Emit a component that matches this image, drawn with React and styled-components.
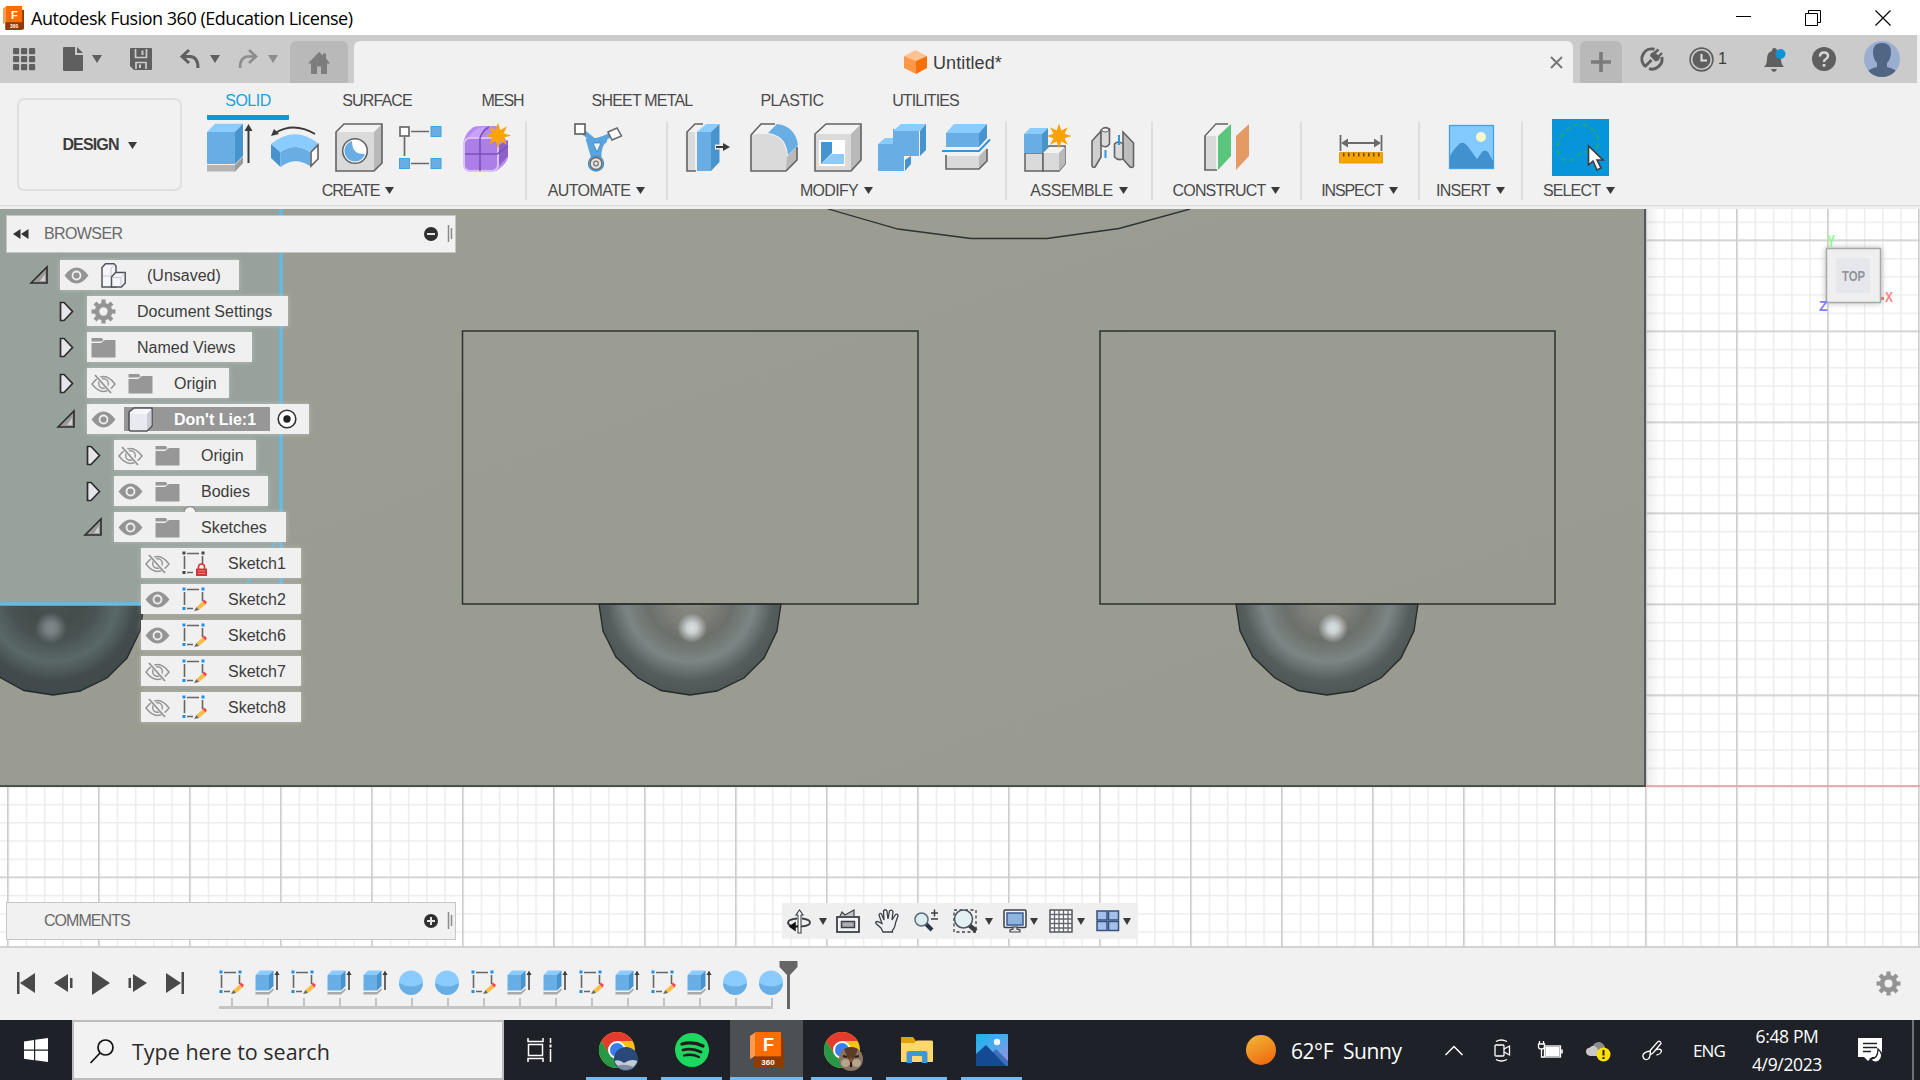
import React from "react";
import styled, { createGlobalStyle } from "styled-components";

const GlobalStyle = createGlobalStyle`
  * {
    box-sizing: border-box;
  }
  body {
    margin: 0;
    overflow: hidden;
    font-family: "Liberation Sans", Arial, sans-serif;
    font-size: 16px;
    color: #3c3c3c;
  }
  svg {
    display: block;
    flex-shrink: 0;
    overflow: visible;
  }
`;

/* ---------- helpers ---------- */

function starPoints(cx, cy, outer, inner, n = 8) {
  const pts = [];
  for (let i = 0; i < n * 2; i++) {
    const r = i % 2 ? inner : outer;
    const a = (Math.PI * i) / n - Math.PI / 2;
    pts.push(`${(cx + r * Math.cos(a)).toFixed(2)},${(cy + r * Math.sin(a)).toFixed(2)}`);
  }
  return pts.join(" ");
}

const Caret = ({ color = "#3a3a3a", w = 9, h = 7 }) => (
  <svg width={w} height={h} viewBox="0 0 10 8" preserveAspectRatio="none">
    <path d="M0 0H10L5 8Z" fill={color} />
  </svg>
);

const Icon48 = ({ children }) => (
  <svg width="48" height="49" viewBox="0 0 48 49" fill="none">
    {children}
  </svg>
);

/* ---------- ribbon icons ---------- */

const Extrude = () => (
  <Icon48>
    <path d="M0 42H28L36 34V40L28 48.500H0Z" fill="#b4b4b4" />
    <path d="M28 42L36 34V40L28 48.500Z" fill="#9b9b9b" />
    <path d="M0 9H28V41H0Z" fill="#68aee4" />
    <path d="M0 9L8 .7H36L28 9Z" fill="#8accff" />
    <path d="M28 9L36 .7V33L28 41Z" fill="#4693cd" />
    <path d="M41.500 40V5" stroke="#3a3a3a" strokeWidth="2" />
    <path d="M37.500 8L41.500 1L45.500 8Z" fill="#3a3a3a" />
  </Icon48>
);

const Revolve = () => (
  <Icon48>
    <path d="M0 21L9.500 29V44L0 35Z" fill="#4693cd" />
    <path d="M9.500 29Q24 19 39 29V43Q24 33 9.500 44Z" fill="#68aee4" />
    <path d="M0 21Q24 1.500 48 21L39 29Q24 19 9.500 29Z" fill="#8accff" />
    <path d="M40 29L47 22V36L40 43Z" fill="#fff" stroke="#606060" strokeWidth="1.600" />
    <path d="M4 10Q23 -1.500 44 11" stroke="#3a3a3a" strokeWidth="2" />
    <path d="M0 13L3 6L8 11Z" fill="#3a3a3a" />
  </Icon48>
);

const Hole = () => (
  <Icon48>
    <path d="M1 9H39V48H1Z" fill="#dadada" />
    <path d="M1 9L9 1H47L39 9Z" fill="#f3f3f3" />
    <path d="M39 9L47 1V40L39 48Z" fill="#b9b9b9" />
    <path d="M1 9L9 1H47V40L39 48H1Z" stroke="#636363" strokeWidth="1.600" />
    <circle cx="20" cy="28" r="12.300" fill="#fff" stroke="#636363" strokeWidth="1.600" />
    <path d="M17 18A10.500 10.500 0 1 0 30 31Q17 32 17 18Z" fill="#68aee4" />
  </Icon48>
);

const CreateSketch = () => (
  <Icon48>
    <path d="M12 8.500H30M5.500 14V33M12 40.500H30" stroke="#6a6a6a" strokeWidth="1.700" />
    <rect x="1" y="4" width="9" height="9" fill="#fff" stroke="#6a6a6a" strokeWidth="1.700" />
    <g fill="#68aee4" stroke="#4b9fdd">
      <rect x="32" y="3.500" width="10" height="10" />
      <rect x="0.500" y="35.500" width="10" height="10" />
      <rect x="32" y="35.500" width="10" height="10" />
    </g>
  </Icon48>
);

const Form = () => (
  <Icon48>
    <path d="M0.500 20Q1 12 9 5Q11 3 18 3H34L45 20V34Q44 40 36 46Q34 48.500 28 48.500H9Q0.500 48.500 0.500 40Z" fill="#b78af0" />
    <path d="M36 22L45 17V33L36 43Z" fill="#8c5fc9" />
    <path d="M3 17Q12 3 22 4L16 15H3Z" fill="#c9a3fb" />
    <rect x="1" y="15" width="34" height="33" rx="6" fill="#aa7fe8" stroke="#dabffb" strokeWidth="2" />
    <path d="M17 15V48M2 31H34L45 23M17 15Q19 8 26 4" stroke="#7b4fb5" strokeWidth="1.500" />
    <polygon points={starPoints(35, 12.5, 13, 6)} fill="#f9a402" />
  </Icon48>
);

const Automate = () => (
  <Icon48>
    <path d="M9 9Q17 15 20 18Q30 16 36 12" stroke="#5aa5de" strokeWidth="5" />
    <path d="M14 15L20 36M32 15Q24 22 25 36" stroke="#5aa5de" strokeWidth="5" />
    <path d="M14 11Q17 17 30 15L33 19L27 24L24 33H20L18 22Z" fill="#5aa5de" />
    <path d="M19 20H27L23 29Z" fill="#f1f1f1" stroke="#3f83b8" strokeWidth=".8" />
    <rect x="1" y="1" width="10" height="10" fill="#fff" stroke="#666" strokeWidth="1.700" />
    <path d="M34 9L43 5L47.500 13L38 17Z" fill="#fff" stroke="#666" strokeWidth="1.500" />
    <circle cx="22" cy="40.500" r="7.500" fill="#e4e4e4" stroke="#4693cd" strokeWidth="1.500" />
    <circle cx="22" cy="40.500" r="6" stroke="#666" strokeWidth="1.500" />
    <circle cx="22" cy="40.500" r="2.300" stroke="#777" strokeWidth="1.200" />
  </Icon48>
);

const PressPull = () => (
  <Icon48>
    <path d="M1 9H9V48H1Z" fill="#dadada" />
    <path d="M10 48H1V9L9 1H17" stroke="#636363" strokeWidth="1.600" />
    <path d="M11 9H25V48H11Z" fill="#68aee4" />
    <path d="M11 9L20 1H33.500L25 9Z" fill="#8accff" />
    <path d="M25 9L33.500 1V39L25 48Z" fill="#4693cd" />
    <path d="M29 24H40" stroke="#f1f1f1" strokeWidth="5" />
    <path d="M30 24H39" stroke="#3a3a3a" strokeWidth="2" />
    <path d="M37 20L44 24L37 28Z" fill="#3a3a3a" />
  </Icon48>
);

const Fillet = () => (
  <Icon48>
    <path d="M1 48V12L11 1H27L18 11Q36 14 37 33L48 23V36L36 48Z" fill="#dadada" />
    <path d="M2 12L11 1H27L18 11Q8 10 2 12Z" fill="#f3f3f3" />
    <path d="M37 34L47 23V37L36 48Z" fill="#b9b9b9" />
    <path d="M25 1H11L1 12V48H36L47 37V24" stroke="#636363" strokeWidth="1.600" />
    <path d="M18 10L27 1Q45 3 48 22L38 32Q36 12 18 10Z" fill="#68aee4" />
  </Icon48>
);

const Shell = () => (
  <Icon48>
    <path d="M1 11H37V48H1Z" fill="#dadada" />
    <path d="M1 11L12 1H47L37 11Z" fill="#f3f3f3" />
    <path d="M37 11L47 1V37L37 48Z" fill="#b9b9b9" />
    <path d="M1 11L12 1H47V37L37 48H1Z" stroke="#636363" strokeWidth="1.600" />
    <rect x="5" y="17" width="26" height="26" fill="#fff" />
    <path d="M7 19H18V30L7 41Z" fill="#4693cd" />
    <path d="M7 41L18 31H30V41Z" fill="#8accff" />
  </Icon48>
);

const Combine = () => (
  <Icon48>
    <path d="M0 21H15V6H41V33H26V48H0Z" fill="#68aee4" />
    <path d="M0 21L7 15H15V21Z" fill="#8accff" />
    <path d="M15 8L23 1H48L42 8Z" fill="#8accff" />
    <path d="M42 8L48 1V27L42 33Z" fill="#4693cd" />
    <path d="M27 37L33 33V41L27 48Z" fill="#4693cd" />
  </Icon48>
);

const Split = () => (
  <Icon48>
    <path d="M4 10H37V24H4Z" fill="#68aee4" />
    <path d="M4 10L12 1H45L37 10Z" fill="#8accff" />
    <path d="M37 10L45 1V15L37 24Z" fill="#4693cd" />
    <path d="M4 33H37V46H4Z" fill="#dadada" />
    <path d="M37 33L45 25V38L37 46Z" fill="#b9b9b9" />
    <path d="M4 32V46H37L45 38V26" stroke="#636363" strokeWidth="1.600" />
    <path d="M0 28H37L48 16.500" stroke="#2e97e0" strokeWidth="2" />
  </Icon48>
);

const NewComponent = () => (
  <Icon48>
    <path d="M1 30H19V48H1Z" fill="#dadada" stroke="#636363" strokeWidth="1.500" />
    <path d="M19 30L25 23H41V41L35 48H19Z" fill="#dadada" stroke="#636363" strokeWidth="1.500" />
    <path d="M19 30L25 24H40L35 30Z" fill="#f3f3f3" />
    <path d="M35 30L41 24V41L35 48Z" fill="#b9b9b9" />
    <path d="M0 11H18V30H0Z" fill="#68aee4" />
    <path d="M0 11L6 5H24L18 11Z" fill="#8accff" />
    <path d="M18 11L24 5V24L18 30Z" fill="#4693cd" />
    <polygon points={starPoints(35, 13, 12.5, 6)} fill="#f9a402" />
  </Icon48>
);

const Joint = () => (
  <Icon48>
    <path d="M4 18L13 8V34L7 44Q4 45 4 42Z" fill="#cfcfcf" stroke="#636363" strokeWidth="1.600" />
    <path d="M13 7Q17 2.500 21.500 6V21Q18 26 13 22Z" fill="#dadada" stroke="#636363" strokeWidth="1.600" />
    <ellipse cx="17.300" cy="7" rx="3.600" ry="2" fill="#eee" stroke="#636363" />
    <path d="M35 9L45.500 20V43Q45 45 42 44L35 36Z" fill="#bdbdbd" stroke="#636363" strokeWidth="1.600" />
    <path d="M26.500 21Q30 17 35 21V36Q30 38 26.500 34Z" fill="#dadada" stroke="#636363" strokeWidth="1.600" />
    <path d="M31 12V22M17.500 27V35" stroke="#2e97e0" strokeWidth="2" />
  </Icon48>
);

const Construct = () => (
  <Icon48>
    <path d="M1 13H12V47H1Z" fill="#dadada" />
    <path d="M13 47H1V13L12 1H24" stroke="#636363" strokeWidth="1.700" />
    <path d="M2 13L12 2H24L14 13Z" fill="#f3f3f3" />
    <path d="M14 13L27 1V33L14 47Z" fill="#5ac57d" />
    <path d="M32 13L45 1V33L32 47Z" fill="#e59a65" />
  </Icon48>
);

const Inspect = () => (
  <Icon48>
    <path d="M3.500 12V28M44.500 12V28M6 20H42" stroke="#6a6a6a" strokeWidth="1.800" />
    <path d="M4 20L11 15.500V24.500ZM44 20L37 15.500V24.500Z" fill="#6a6a6a" />
    <rect x="2.500" y="29.500" width="43" height="10.500" fill="#f9a402" />
    <path d="M6 31.500H43" stroke="#5d4b1e" strokeDasharray="1.500 3.500" strokeWidth="4" />
    <path d="M2.500 29.500H45.500V40H2.500Z" stroke="#dd8f00" strokeWidth=".8" />
  </Icon48>
);

const Insert = () => (
  <Icon48>
    <rect x="1.500" y="2.500" width="44" height="43" fill="#82caff" stroke="#4b9fdd" strokeWidth="1.300" />
    <path d="M2 33Q7 24 12.500 20Q17 19 21 25L29 36L34 29Q37 26 40 29L45 38V45H2Z" fill="#4091cd" />
    <circle cx="33" cy="14" r="5" fill="#f9f8c9" />
  </Icon48>
);

const Select = () => (
  <svg width="57" height="57" viewBox="0 0 57 57" fill="none">
    <rect width="57" height="57" fill="#0795da" />
    <path
      d="M38 33Q27 32 24 39Q15 45 8 38Q2 28 11 15Q20 3 33 6Q48 12 46 26Q43 32 38 33Z"
      stroke="#23a878"
      strokeWidth="1.800"
      strokeDasharray="5 4"
    />
    <path d="M36.500 27V46L41 42L45 51L49 49L45 41H51Z" fill="#fff" stroke="#3d3d3d" strokeWidth="1.600" />
  </svg>
);

/* ---------- small icons shared by tree and timeline ---------- */

const SketchIcon = ({ locked }) => (
  <svg width="25" height="25" viewBox="0 0 25 25" fill="none">
    <path d="M5 2.500H17M2.500 5V18M20.500 5V14M5 21.500H11" stroke="#666" strokeWidth="1.600" />
    <g fill={locked ? "#444" : "#1d8fe6"}>
      <rect x="0.500" y="0.500" width="3" height="3" />
      <rect x="19.500" y="0.500" width="3" height="3" />
      <rect x="0.500" y="20" width="3" height="3" />
    </g>
    {locked ? (
      <g>
        <path d="M16.500 18V16A3 3 0 0 1 22.500 16V18" stroke="#d33" strokeWidth="1.600" />
        <rect x="14" y="17.500" width="11" height="7.500" fill="#d33638" />
        <path d="M16 20H23M16 22.500H23" stroke="#f08080" />
      </g>
    ) : (
      <g>
        <path d="M14.500 20L20.500 14.500L23.500 17.500L17 23Z" fill="#fbbd45" />
        <path d="M20.500 14.500L22 12.500L25 15L23.500 17.500Z" fill="#f2474c" />
        <path d="M14.500 20L17 23L12 24Z" fill="#666" />
      </g>
    )}
  </svg>
);

const ExtrudeSmall = () => (
  <svg width="25" height="25" viewBox="0 0 25 25" fill="none">
    <path d="M0.500 22H14L18.500 18V20.500L14 24.500H0.500Z" fill="#a9a9a9" />
    <path d="M0.500 5H14V20.500H0.500Z" fill="#68aee4" />
    <path d="M0.500 5L5 .5H18.500L14 5Z" fill="#8accff" />
    <path d="M14 5L18.500 .5V16L14 20.500Z" fill="#4693cd" />
    <path d="M22 20V3" stroke="#3a3a3a" strokeWidth="1.500" />
    <path d="M19.500 5L22 .5L24.500 5Z" fill="#3a3a3a" />
  </svg>
);

const SphereSmall = () => (
  <svg width="25" height="25" viewBox="0 0 25 25">
    <circle cx="12" cy="12.500" r="12" fill="#8accff" />
    <path d="M0 13Q12 20 24 13A12 12 0 0 1 0 13Z" fill="#68aee4" />
  </svg>
);

const Eye = ({ off }) => (
  <svg width="25" height="25" viewBox="0 0 25 25" fill="none">
    {off ? (
      <g stroke="#949494" strokeWidth="1.400">
        <path d="M1 13Q12.500 -2 24 13Q12.500 28 1 13Z" />
        <circle cx="12.500" cy="12.500" r="4.800" />
        <path d="M4 3L21 22" stroke="#f0f0f0" strokeWidth="4" />
        <path d="M4 4L20 22" strokeWidth="1.800" />
      </g>
    ) : (
      <g>
        <path d="M.5 12.500Q12.500 -3.500 24.500 12.500Q12.500 28.500 .5 12.500Z" fill="#949494" />
        <circle cx="12.500" cy="12.500" r="4" stroke="#efefef" strokeWidth="1.800" />
      </g>
    )}
  </svg>
);

const Folder = () => (
  <svg width="25" height="25" viewBox="0 0 25 25" fill="#979797">
    <path d="M.5 3.500Q.5 3 1 3H11L12.500 5.500L10 6.500H.5Z" />
    <path d="M.5 8H10L14 5H24.500V22.500H.5Z" />
  </svg>
);

const Gear = ({ size = 25, color = "#949494", hole = 4.2 }) => (
  <svg width={size} height={size} viewBox="0 0 25 25" fill="none">
    <g stroke={color} strokeWidth="4.200">
      {[0, 45, 90, 135].map((a) => (
        <path key={a} d="M12.500 .5V24.500" transform={`rotate(${a} 12.500 12.500)`} />
      ))}
    </g>
    <circle cx="12.500" cy="12.500" r="8.800" fill={color} />
    <circle cx="12.500" cy="12.500" r={hole} fill="#f0f0f0" />
  </svg>
);

const Assembly = () => (
  <svg width="25" height="25" viewBox="0 0 25 25" fill="#f6f6fa" stroke="#50545a" strokeWidth="1.500">
    <path d="M1 4.500L4.500 .8H13L15 3V24H1Z" />
    <path d="M2 13H10V5M10 5L14 2" fill="none" stroke="#c5c8d0" strokeWidth="1" />
    <path d="M10.500 24V14L14.500 9.500H24.200V20L20.500 24Z" />
    <path d="M11.500 14.500H20V23M20 14.500L23.500 10.500" fill="none" stroke="#c5c8d0" strokeWidth="1" />
  </svg>
);

const Component = () => (
  <svg width="25" height="25" viewBox="0 0 25 25">
    <path d="M1 5L6 1H24V19L19 24H3Q1 24 1 22Z" fill="#f7f7fb" stroke="#50545a" strokeWidth="1.600" />
    <path d="M19 7L23.500 2V18L19 23Z" fill="#c9ccd4" />
    <path d="M2 7H19V23H2Z" fill="#e9eaf1" />
  </svg>
);

const Disclosure = ({ open }) =>
  open ? (
    <svg width="18" height="18" viewBox="0 0 18 18">
      <path d="M1 17L17 1V17Z" fill="#9a9a9a" stroke="#2c2c2c" strokeWidth="1.600" />
      <path d="M10 15L15 8V15Z" fill="#cfcfcf" />
    </svg>
  ) : (
    <svg width="15" height="21" viewBox="0 0 15 21">
      <path d="M1.500 1.500H5L13.500 10.500L5 19.500H1.500Z" fill="#e6e6ea" stroke="#2c2c2c" strokeWidth="1.700" />
    </svg>
  );

/* ---------- title bar ---------- */

const TitleBar = styled.header`
  display: flex;
  align-items: center;
  height: 35px;
  padding: 0 29px 0 3px;
  background: #fff;
`;

const TitleText = styled.h1`
  flex: 1;
  margin: 1px 0 0 7px;
  font: 400 18px "Open Sans", "Noto Sans", sans-serif;
  letter-spacing: -0.48px;
  color: #000;
  white-space: nowrap;
`;

const WindowButtons = styled.div`
  display: flex;
  align-items: center;
  gap: 54px;
`;

const FusionIcon = ({ w, h }) => (
  <svg width={w} height={h} viewBox="0 0 34 37" preserveAspectRatio="none">
    <path d="M4 6L34 6V36H4Z" fill="#8f3a00" />
    <path d="M0 4L6 0V24L0 28Z" fill="#ff9a52" />
    <path d="M4 25H31V37H4Z" fill="#8f3a00" />
    <path d="M5 0H31V25H5Z" fill="#ff6d00" />
    <text x="18.500" y="19.500" fontSize="18" fontWeight="700" textAnchor="middle" fill="#fff" fontFamily="Liberation Sans">
      F
    </text>
    <text x="18" y="34" fontSize="8" fontWeight="700" textAnchor="middle" fill="#fff" fontFamily="Liberation Sans">
      360
    </text>
  </svg>
);

const AppTitle = () => (
  <TitleBar>
    <FusionIcon w={21} h={24} />
    <TitleText>Autodesk Fusion 360 (Education License)</TitleText>
    <WindowButtons>
      <svg width="15" height="16" viewBox="0 0 15 16">
        <path d="M0 6.500H15" stroke="#000" />
      </svg>
      <svg width="16" height="16" viewBox="0 0 16 16" fill="none" stroke="#000">
        <path d="M.5 3.500H12.500V15.500H.5ZM3.500 3V.5H15.500V12.500H13" />
      </svg>
      <svg width="16" height="16" viewBox="0 0 16 16" stroke="#000" strokeWidth="1.200">
        <path d="M.5 .5L15.500 15.500M15.500 .5L.5 15.500" />
      </svg>
    </WindowButtons>
  </TitleBar>
);

/* ---------- document tab bar ---------- */

const TabBar = styled.nav`
  display: flex;
  align-items: center;
  height: 48px;
  margin-right: 3px;
  background: #cbcbcb;
`;

const QuickAccess = styled.div`
  display: flex;
  align-items: center;
  width: 290px;
  padding-left: 13px;
`;

const Slot = styled.div`
  display: flex;
  align-items: center;
  gap: ${(p) => p.$gap || 0}px;
  width: ${(p) => p.$w}px;
`;

const SmallTab = styled.div`
  display: flex;
  align-items: center;
  justify-content: center;
  align-self: flex-end;
  width: ${(p) => p.$w}px;
  height: 42px;
  padding-top: ${(p) => p.$pt || 0}px;
  border-radius: 6px 6px 0 0;
  background: #b9b9b9;
`;

const DocumentTab = styled.div`
  display: flex;
  align-items: center;
  align-self: flex-end;
  width: 1219px;
  height: 42px;
  margin: 0 7px 0 6px;
  padding: 0 10px 0 550px;
  border-radius: 6px 6px 0 0;
  background: #f1f1f1;
`;

const DocumentName = styled.span`
  flex: 1;
  margin: 2px 0 0 6px;
  font-size: 18px;
  letter-spacing: 0.1px;
`;

const Account = styled.div`
  display: flex;
  align-items: center;
  padding-left: 18px;
`;

const DocumentTabs = () => (
  <TabBar>
    <QuickAccess>
      <Slot $w={50}>
        <svg width="22" height="22" viewBox="0 0 22 22" fill="#5f5f5f">
          {[0, 8, 16].map((y) => [0, 8, 16].map((x) => <rect key={x + "-" + y} x={x} y={y} width="6.200" height="6.200" rx="1" />))}
        </svg>
      </Slot>
      <Slot $w={67} $gap={9}>
        <svg width="20" height="24" viewBox="0 0 20 24" fill="#5f5f5f">
          <path d="M0 1Q0 0 1 0H12V8H20V23Q20 24 19 24H1Q0 24 0 23Z" />
          <path d="M14 0L20 6H14Z" />
        </svg>
        <Caret color="#5f5f5f" w={10} h={8} />
      </Slot>
      <Slot $w={50}>
        <svg width="22" height="22" viewBox="0 0 22 22">
          <path d="M1 0H21Q22 0 22 1V21Q22 22 21 22H4L0 18V1Q0 0 1 0Z" fill="#5f5f5f" />
          <path d="M5.500 1V9.500H16.500V1M6 21V14.500H16V21" fill="none" stroke="#cbcbcb" strokeWidth="1.700" />
          <path d="M12.500 2.500V7M10 16.500V20" stroke="#cbcbcb" strokeWidth="2" />
        </svg>
      </Slot>
      <Slot $w={58} $gap={10}>
        <svg width="20" height="20" viewBox="0 0 20 20" fill="none" stroke="#5f5f5f" strokeWidth="3">
          <path d="M9 1L2 7.500L9 14M3 7.500H10Q18 8 18 19" />
        </svg>
        <Caret color="#5f5f5f" w={10} h={8} />
      </Slot>
      <Slot $w={52} $gap={10}>
        <svg width="20" height="20" viewBox="0 0 20 20" fill="none" stroke="#8d8d8d" strokeWidth="2.600">
          <path d="M11 1L18 7.500L11 14M17 7.500H10Q2 8 2 19" />
        </svg>
        <Caret color="#8d8d8d" w={10} h={8} />
      </Slot>
    </QuickAccess>
    <SmallTab $w={58} $pt={2}>
      <svg width="22" height="22" viewBox="0 0 22 22" fill="#7d7d7d">
        <path d="M11 0L15 3.500V1.500H18V6.500L22 11.500H19V22H13V14.500H9V22H3V11.500H0Z" />
      </svg>
    </SmallTab>
    <DocumentTab>
      <svg width="23" height="24" viewBox="0 0 23 24">
        <path d="M0 6L11.500 0L23 6L12 11Z" fill="#ffc393" />
        <path d="M0 6L12 11V24L0 18Z" fill="#ff9747" />
        <path d="M12 11L23 6V18L12 24Z" fill="#fa6f05" />
      </svg>
      <DocumentName>Untitled*</DocumentName>
      <svg width="13" height="13" viewBox="0 0 13 13" stroke="#777" strokeWidth="2">
        <path d="M1 1L12 12M12 1L1 12" />
      </svg>
    </DocumentTab>
    <SmallTab $w={42}>
      <svg width="20" height="20" viewBox="0 0 20 20" stroke="#7b7b7b" strokeWidth="3.600">
        <path d="M10 0V20M0 10H20" />
      </svg>
    </SmallTab>
    <Account>
      <Slot $w={49}>
        <svg width="24" height="24" viewBox="0 0 24 24" fill="none">
          <path d="M14.500 2.300A10 10 0 0 0 5 19.200M21.800 10A10 10 0 0 1 9 21.600" stroke="#5f5f5f" strokeWidth="3" />
          <path d="M4.500 20L11.500 13" stroke="#5f5f5f" strokeWidth="3" />
          <path d="M10 9L15.500 14.500Q19.500 14 20 10L14.500 5Q10.500 5 10 9Z" fill="#5f5f5f" />
          <path d="M14.500 6L18.500 2.500M18 10L22 6" stroke="#5f5f5f" strokeWidth="2.400" />
        </svg>
      </Slot>
      <Slot $w={75} $gap={4}>
        <svg width="25" height="25" viewBox="0 0 25 25" fill="none">
          <circle cx="12.500" cy="12.500" r="11.400" stroke="#5f5f5f" strokeWidth="1.600" />
          <circle cx="12.500" cy="12.500" r="9" fill="#5f5f5f" />
          <path d="M12.500 7V13.500H18" stroke="#e0e0e0" strokeWidth="2" />
        </svg>
        <span>1</span>
      </Slot>
      <Slot $w={48}>
        <svg width="23" height="25" viewBox="0 0 23 25">
          <path d="M10 1Q13 1 13 4Q17 6 17 12Q17 17 20 20H0Q3 17 3 12Q3 5 8 4Q8 1 10 1Z" fill="#5f5f5f" />
          <path d="M7 22H13Q12 25 10 25Q8 25 7 22Z" fill="#5f5f5f" />
          <circle cx="16.500" cy="7" r="5" fill="#0795da" />
        </svg>
      </Slot>
      <Slot $w={52}>
        <svg width="24" height="24" viewBox="0 0 24 24" fill="none">
          <circle cx="12" cy="12" r="12" fill="#5f5f5f" />
          <path d="M8 9.500Q8 5.500 12 5.500Q16 5.500 16 9Q16 11 13.500 12.300Q12 13 12 15" stroke="#d6d6d6" strokeWidth="2.500" />
          <rect x="10.700" y="17" width="2.700" height="2.700" fill="#d6d6d6" />
        </svg>
      </Slot>
      <svg width="36" height="36" viewBox="0 0 36 36">
        <circle cx="18" cy="18" r="18" fill="#99aed0" />
        <path d="M18 2Q27 2 27 11Q27 18 23 22V26Q31 28 31.500 30A18 18 0 0 1 4.500 30Q5 28 13 26V22Q9 18 9 11Q9 2 18 2Z" fill="#516685" />
      </svg>
    </Account>
  </TabBar>
);

/* ---------- ribbon ---------- */

const Ribbon = styled.section`
  display: flex;
  height: 126px;
  background: #f1f1f1;
  box-shadow: inset 0 -3px #eeeeee, inset 0 -4px #d9d9d9;
`;

const WorkspaceButton = styled.div`
  display: flex;
  align-items: center;
  justify-content: center;
  gap: 9px;
  width: 165px;
  height: 93px;
  margin: 15px 17px 0 17px;
  padding-top: 1px;
  border: 2px solid #dfdfdf;
  border-radius: 7px;
  font-weight: 700;
  letter-spacing: -0.85px;
`;

const RibbonMain = styled.div`
  display: flex;
  flex-direction: column;
`;

const RibbonTabs = styled.div`
  display: flex;
  gap: 31px;
  height: 37px;
  padding-left: 8px;
`;

const RibbonTab = styled.div`
  display: flex;
  align-items: center;
  justify-content: center;
  width: ${(p) => p.$w}px;
  padding-top: 3px;
  border-bottom: 5px solid ${(p) => (p.$active ? "#0f97d9" : "transparent")};
  border-radius: 1px;
  letter-spacing: ${(p) => p.$ls}px;
  color: ${(p) => (p.$active ? "#1a9fdf" : "#4a4a4a")};
  white-space: nowrap;
`;

const Groups = styled.div`
  display: flex;
`;

const Group = styled.div`
  display: flex;
  flex-direction: column;
  align-items: center;
  width: ${(p) => p.$w}px;
  height: 78px;
  margin-top: 2px;
  padding: 1px ${(p) => p.$pr || 0}px 0 0;
  border-right: ${(p) => (p.$last ? "none" : "2px solid #dddddd")};
`;

const GroupIcons = styled.div`
  display: flex;
  justify-content: center;
  align-items: center;
  gap: 16px;
  height: 49px;
  padding-left: 2px;
`;

const GroupLabel = styled.div`
  display: flex;
  align-items: center;
  gap: 6px;
  height: 20px;
  margin-top: 10px;
  letter-spacing: ${(p) => p.$ls}px;
  color: #4a4a4a;

  svg {
    margin-bottom: 2px;
  }
`;

const ribbonTabs = [
  ["SOLID", 82, -0.5],
  ["SURFACE", 114, -0.85],
  ["MESH", 75, -1],
  ["SHEET METAL", 142, -0.8],
  ["PLASTIC", 96, -0.5],
  ["UTILITIES", 109, -0.9],
];

const ribbonGroups = [
  { label: "CREATE", w: 328, ls: -1, pr: 8, icons: [Extrude, Revolve, Hole, CreateSketch, Form] },
  { label: "AUTOMATE", w: 141, ls: -0.6, icons: [Automate] },
  { label: "MODIFY", w: 339, ls: -0.7, icons: [PressPull, Fillet, Shell, Combine, Split] },
  { label: "ASSEMBLE", w: 146, ls: -0.5, icons: [NewComponent, Joint] },
  { label: "CONSTRUCT", w: 149, ls: -0.85, icons: [Construct] },
  { label: "INSPECT", w: 118, ls: -1.1, pr: 1, icons: [Inspect] },
  { label: "INSERT", w: 103, ls: -0.7, icons: [Insert] },
  { label: "SELECT", w: 114, ls: -0.85, pr: 2, icons: [Select] },
];

const Toolbar = () => (
  <Ribbon>
    <WorkspaceButton>
      DESIGN
      <Caret />
    </WorkspaceButton>
    <RibbonMain>
      <RibbonTabs>
        {ribbonTabs.map(([name, w, ls], i) => (
          <RibbonTab key={name} $w={w} $ls={ls} $active={i === 0}>
            {name}
          </RibbonTab>
        ))}
      </RibbonTabs>
      <Groups>
        {ribbonGroups.map((g, i) => (
          <Group key={g.label} $w={g.w} $pr={g.pr} $last={i === ribbonGroups.length - 1}>
            <GroupIcons>
              {g.icons.map((Icon, k) => (
                <Icon key={k} />
              ))}
            </GroupIcons>
            <GroupLabel $ls={g.ls}>
              {g.label}
              <Caret />
            </GroupLabel>
          </Group>
        ))}
      </Groups>
    </RibbonMain>
  </Ribbon>
);

/* ---------- model viewport ---------- */

const Viewport = styled.main`
  position: relative;
  height: 737px;
  overflow: hidden;
  background: #fff;
`;

const Pocket = ({ cx, glow, dim }) => {
  const id = "pocket" + cx;
  const pts = [
    [-91, 0], [-87, 27], [-74, 53], [-52, 74], [-29, 86.5], [0, 91],
    [27, 87], [54, 74], [74, 54], [87, 27], [91, 0],
  ];
  return (
    <g>
      <defs>
        <radialGradient id={id} gradientUnits="userSpaceOnUse" cx={cx} cy="388" r="98">
          <stop offset="0" stopColor={dim ? "#4c5353" : "#8e9087"} />
          <stop offset=".28" stopColor={dim ? "#454c4c" : "#7b7d76"} />
          <stop offset=".44" stopColor={dim ? "#495252" : "#6c706b"} />
          <stop offset=".66" stopColor={dim ? "#5b6868" : "#7b8684"} />
          <stop offset=".85" stopColor={dim ? "#434c4d" : "#555e5c"} />
          <stop offset="1" stopColor={dim ? "#3f494b" : "#4d5655"} />
        </radialGradient>
        <radialGradient id={id + "g"}>
          <stop offset="0" stopColor={glow} />
          <stop offset=".35" stopColor={glow} stopOpacity=".85" />
          <stop offset="1" stopColor={glow} stopOpacity="0" />
        </radialGradient>
      </defs>
      <polygon
        points={pts.map(([x, y]) => `${cx + x},${395 + y}`).join(" ")}
        fill={`url(#${id})`}
        stroke="#232a2a"
        strokeWidth="1.300"
      />
      <circle cx={cx + (dim ? -2 : cx > 1000 ? 6 : 2)} cy="419" r={dim ? 16 : 15} fill={`url(#${id}g)`} />
    </g>
  );
};

const Model = () => (
  <svg width="1920" height="737" viewBox="0 0 1920 737" fill="none">
    <defs>
      <pattern id="minor" x="7.500" y="30.700" width="18.200" height="18.200" patternUnits="userSpaceOnUse">
        <path d="M0 0H18.200M0 0V18.200" stroke="#ececec" strokeWidth="3" />
      </pattern>
      <pattern id="major" x="7" y="30.500" width="91" height="91" patternUnits="userSpaceOnUse">
        <path d="M0 0H91M0 0V91" stroke="#cdcdcd" strokeWidth="3" />
      </pattern>
      <linearGradient id="face" x1="0" y1="0" x2="1" y2="1">
        <stop offset="0" stopColor="#9d9e93" />
        <stop offset=".5" stopColor="#9b9c91" />
        <stop offset="1" stopColor="#999a90" />
      </linearGradient>
      <linearGradient id="shade">
        <stop offset="0" stopColor="#000" stopOpacity=".08" />
        <stop offset="1" stopColor="#000" stopOpacity="0" />
      </linearGradient>
    </defs>
    <rect width="1920" height="737" fill="url(#minor)" />
    <rect width="1920" height="737" fill="url(#major)" />
    <rect x="1645" width="16" height="577" fill="url(#shade)" />
    <path d="M1645 577H1920" stroke="#f49a9a" strokeWidth="1.500" />
    <rect width="1645" height="577" fill="url(#face)" />
    <path d="M0 577H1645V0" stroke="#47524f" strokeWidth="1.800" />
    <path d="M828 0L898 20L971 29.500H1047L1119 19.500L1190 0" stroke="#2b3231" strokeWidth="1.300" />
    <Pocket cx={53} glow="#7f898d" dim />
    <Pocket cx={690} glow="#d9e0e2" />
    <Pocket cx={1327} glow="#d9e0e2" />
    <g stroke="#2b3231" strokeWidth="1.500">
      <rect x="462.500" y="122" width="455.500" height="273" />
      <rect x="1100" y="122" width="455" height="273" />
    </g>
    <rect width="281" height="395" fill="#97a29c" />
    <path d="M281 0V395H0" stroke="#63bce3" strokeWidth="3.500" />
    <path d="M281 325L233 395" stroke="#63bce3" strokeWidth="1.800" />
    <circle cx="190" cy="303.500" r="6" fill="#f5f5f5" stroke="#8a8a8a" strokeWidth="1.500" />
  </svg>
);

const Panel = styled.div`
  position: absolute;
  top: ${(p) => p.$top}px;
  left: 6px;
  display: flex;
  align-items: center;
  width: 450px;
  height: 38px;
  padding: 0 0 0 6px;
  border: 1.500px solid #c6c6c6;
  background: #f1f1f1;
`;

const PanelTitle = styled.span`
  flex: 1;
  padding-left: ${(p) => p.$pad}px;
  letter-spacing: ${(p) => p.$ls}px;
  color: #6a6a6a;
`;

const PanelEnd = ({ plus }) => (
  <svg width="31" height="18" viewBox="0 0 31 18" fill="none">
    <circle cx="7" cy="9" r="7" fill="#2f2f2f" />
    <path d={plus ? "M3 9H11M7 5V13" : "M3 9H11"} stroke="#e6e6e6" strokeWidth="2" />
    <path d="M24.500 0V17M27.500 3V14" stroke="#8b8b8b" strokeWidth="1.500" />
  </svg>
);

const Tree = styled.div`
  position: absolute;
  top: 51px;
  left: 30px;
  display: flex;
  flex-direction: column;
  gap: 6px;
`;

const TreeRow = styled.div`
  display: flex;
  align-items: center;
  height: 30px;
  padding-left: ${(p) => p.$level * 27}px;
`;

const Toggle = styled.div`
  display: flex;
  justify-content: center;
  width: 18px;
  margin-right: 12px;
`;

const Node = styled.div`
  display: flex;
  align-items: center;
  gap: 12px;
  width: ${(p) => p.$w}px;
  height: 30px;
  padding-left: 4px;
  background: #f0f0f0;
  box-shadow: 0 0 5px rgba(240, 240, 240, 0.35);
`;

const NodeBody = styled.div`
  display: flex;
  align-items: center;
  gap: 21px;
  height: 24px;
  padding-right: 14px;
  margin-right: ${(p) => (p.$selected ? -5 : 0)}px;
  color: ${(p) => (p.$selected ? "#fff" : "#3c3c3c")};
  font-weight: ${(p) => (p.$selected ? 700 : 400)};
  background: ${(p) => (p.$selected ? "#979797" : "transparent")};
  box-shadow: ${(p) => (p.$selected ? "-4px 0 #979797" : "none")};
  white-space: nowrap;
`;

const NodeText = styled.span`
  padding-top: 1px;
`;

const treeRows = [
  { text: "(Unsaved)", level: 0, w: 179, open: true, eye: "on", icon: <Assembly /> },
  { text: "Document Settings", level: 1, w: 201, open: false, icon: <Gear /> },
  { text: "Named Views", level: 1, w: 165, open: false, icon: <Folder /> },
  { text: "Origin", level: 1, w: 142, open: false, eye: "off", icon: <Folder /> },
  { text: "Don't Lie:1", level: 1, w: 222, open: true, eye: "on", icon: <Component />, selected: true },
  { text: "Origin", level: 2, w: 142, open: false, eye: "off", icon: <Folder /> },
  { text: "Bodies", level: 2, w: 154, open: false, eye: "on", icon: <Folder /> },
  { text: "Sketches", level: 2, w: 172, open: true, eye: "on", icon: <Folder /> },
  { text: "Sketch1", level: 3, w: 160, eye: "off", icon: <SketchIcon locked /> },
  { text: "Sketch2", level: 3, w: 160, eye: "on", icon: <SketchIcon /> },
  { text: "Sketch6", level: 3, w: 160, eye: "on", icon: <SketchIcon /> },
  { text: "Sketch7", level: 3, w: 160, eye: "off", icon: <SketchIcon /> },
  { text: "Sketch8", level: 3, w: 160, eye: "off", icon: <SketchIcon /> },
];

const BrowserTree = () => (
  <Tree>
    {treeRows.map((row, i) => (
      <TreeRow key={i} $level={row.level}>
        <Toggle>{row.open !== undefined && <Disclosure open={row.open} />}</Toggle>
        <Node $w={row.w}>
          {row.eye && <Eye off={row.eye === "off"} />}
          <NodeBody $selected={row.selected}>
            {row.icon}
            <NodeText>{row.text}</NodeText>
          </NodeBody>
          {row.selected && (
            <svg width="20" height="20" viewBox="0 0 20 20">
              <circle cx="10" cy="10" r="8.800" fill="#fff" stroke="#333" strokeWidth="1.600" />
              <circle cx="10" cy="10" r="3.700" fill="#222" />
            </svg>
          )}
        </Node>
      </TreeRow>
    ))}
  </Tree>
);

const CubeWrap = styled.div`
  position: absolute;
  top: 22px;
  left: 1815px;
`;

const ViewCube = () => (
  <CubeWrap>
    <svg width="84" height="84" viewBox="0 0 84 84" fontFamily="Liberation Sans" fontWeight="700">
      <rect x="11.500" y="17.500" width="54" height="54" fill="#efefef" stroke="#a9a9a9" strokeWidth="1.500" style={{ filter: "drop-shadow(0 0 3px #bbb)" }} />
      <rect x="21" y="27" width="34" height="35" fill="#e5e7ec" />
      <text x="27" y="50" fontSize="14" textLength="23" lengthAdjust="spacingAndGlyphs" fill="#92959a">
        TOP
      </text>
      <text x="12" y="16.500" fontSize="18" textLength="8" lengthAdjust="spacingAndGlyphs" fill="#8dfa8d">
        Y
      </text>
      <text x="70" y="71" fontSize="14.500" textLength="8" lengthAdjust="spacingAndGlyphs" fill="#ff8585">
        X
      </text>
      <text x="4" y="80" fontSize="14.500" textLength="8.500" lengthAdjust="spacingAndGlyphs" fill="#8080fa">
        Z
      </text>
      <rect x="66" y="66" width="3" height="3" fill="#f07070" />
    </svg>
  </CubeWrap>
);

const NavBar = styled.div`
  position: absolute;
  top: 694px;
  left: 782px;
  display: flex;
  align-items: center;
  width: 356px;
  height: 36px;
  padding-left: 5px;
  background: #efefef;
`;

const NavItem = styled.div`
  display: flex;
  align-items: center;
  justify-content: space-between;
  width: ${(p) => p.$w}px;
  margin-right: ${(p) => p.$mr}px;
`;

const Nav24 = ({ children }) => (
  <svg width="24" height="24" viewBox="0 0 24 24" fill="none" stroke="#3d4047" strokeWidth="1.500">
    {children}
  </svg>
);

const Navigation = () => (
  <NavBar>
    <NavItem $w={40} $mr={9}>
      <Nav24>
        <path d="M10 9.500Q1 10.500 1 13.500Q1 16 5 17.200M15 9.500Q23 10.500 23 13.500Q23 17 13 17.500" strokeWidth="1.900" />
        <path d="M11 24V6H9L12.500 1L16 6H14V24Z" fill="#fff" strokeWidth="1.100" />
        <path d="M3 17.500L8 14V21Z" fill="#111" stroke="#111" />
        <path d="M6 17.500H11" stroke="#111" strokeWidth="2" />
      </Nav24>
      <Caret w={8} />
    </NavItem>
    <NavItem $w={24} $mr={15}>
      <Nav24>
        <path d="M4 7L6 3L9 6L18 1V7" fill="#c4c6ca" strokeWidth="1.200" />
        <rect x="1" y="8" width="22" height="15" fill="#f3f3f5" strokeWidth="1.800" />
        <rect x="5.500" y="12.500" width="13" height="6" fill="#a9adb5" />
      </Nav24>
    </NavItem>
    <NavItem $w={24} $mr={15}>
      <Nav24>
        <path
          d="M8 23L6 19L1 14.500Q0 12.500 2.500 12.500L7 14.500L4 6Q4.500 3.500 6.500 5L9 11L8.500 2Q10.500 -.5 12 2L13 10L14.500 2Q16.500 0 18 2.500L17 11L20.500 5.500Q23 4.500 23 7L20.500 14Q20 19 17.500 21V23Z"
          fill="#eef0f4"
          strokeWidth="1.300"
        />
      </Nav24>
    </NavItem>
    <NavItem $w={24} $mr={15}>
      <Nav24>
        <path d="M12 15L18 21" stroke="#2b3444" strokeWidth="4" />
        <circle cx="7.500" cy="10.500" r="6.500" fill="#dcecf0" stroke="#5b6c7c" />
        <path d="M17 4H24M20.500 .5V7.500M17 10H24" />
      </Nav24>
    </NavItem>
    <NavItem $w={40} $mr={10}>
      <Nav24>
        <rect x="1" y="1" width="22" height="22" strokeDasharray="3 2.500" strokeWidth="1.300" />
        <path d="M16 16L23 22" stroke="#3c3c3c" strokeWidth="4.500" />
        <circle cx="10.500" cy="10" r="9" fill="#e3f1f2" stroke="#4c5560" />
      </Nav24>
      <Caret w={8} />
    </NavItem>
    <NavItem $w={35} $mr={11}>
      <Nav24>
        <rect x="1" y="1" width="22" height="17.500" rx="1" fill="#f2f2f2" />
        <rect x="4" y="4" width="16" height="12" fill="#90b4e0" stroke="#3b5c94" />
        <path d="M7 23H17V21L14 20V18H10V20L7 21Z" fill="#e6e6e6" strokeWidth="1.200" />
      </Nav24>
      <Caret w={8} />
    </NavItem>
    <NavItem $w={36} $mr={11}>
      <Nav24>
        <rect x="1" y="1" width="22" height="22" fill="#fff" stroke="#555" />
        <path d="M5.500 1V23M10 1V23M14.500 1V23M19 1V23M1 5.500H23M1 10H23M1 14.500H23M1 19H23" stroke="#62666e" strokeWidth="1.300" />
      </Nav24>
      <Caret w={8} />
    </NavItem>
    <NavItem $w={35} $mr={0}>
      <Nav24>
        <g fill="#a4c0ea" stroke="#33507f">
          <rect x="1" y="2" width="10" height="9" />
          <rect x="12.500" y="2" width="10" height="9" />
          <rect x="1" y="12.500" width="10" height="9" />
          <rect x="12.500" y="12.500" width="10" height="9" />
        </g>
      </Nav24>
      <Caret w={8} />
    </NavItem>
  </NavBar>
);

/* ---------- timeline ---------- */

const TimelineBar = styled.section`
  display: flex;
  height: 74px;
  padding: 0 19px 0 16px;
  background: #f1f1f1;
  border-top: 2px solid #d2d2d2;
`;

const Playback = styled.div`
  display: flex;
  align-items: center;
  justify-content: space-between;
  width: 169px;
  height: 24px;
  margin: 23px 34px 0 0;
`;

const Features = styled.div`
  display: flex;
  height: 39px;
  margin-top: 22px;
  border-bottom: 3px solid #c4c4c4;
`;

const Feature = styled.div`
  display: flex;
  flex-direction: column;
  align-items: center;
  gap: 3px;
  width: 25px;
  margin-right: ${(p) => (p.$last ? -11 : 11)}px;
`;

const Tick = styled.i`
  width: 2px;
  height: 9px;
  background: #c4c4c4;
`;

const Marker = styled.div`
  margin: 13px auto 0 6px;
`;

const GearSlot = styled.div`
  margin-top: 23px;
`;

const FEATURES = "SESEEOOSEESESEOO";
const featureIcons = { S: SketchIcon, E: ExtrudeSmall, O: SphereSmall };

const Timeline = () => (
  <TimelineBar>
    <Playback>
      <svg width="19" height="22" viewBox="0 0 19 22" fill="#4a4a4a">
        <path d="M1 0H3.500V22H1ZM19 1V21L4 11Z" />
      </svg>
      <svg width="19" height="20" viewBox="0 0 19 20" fill="#4a4a4a">
        <path d="M0 10L14 1V19ZM16 5H18.500V15H16Z" />
      </svg>
      <svg width="18" height="24" viewBox="0 0 18 24" fill="#4a4a4a">
        <path d="M0 0L18 12L0 24Z" />
      </svg>
      <svg width="19" height="20" viewBox="0 0 19 20" fill="#4a4a4a">
        <path d="M19 10L5 1V19ZM.5 5H3V15H.5Z" />
      </svg>
      <svg width="19" height="22" viewBox="0 0 19 22" fill="#4a4a4a">
        <path d="M15.500 0H18V22H15.500ZM0 1V21L15 11Z" />
      </svg>
    </Playback>
    <Features>
      {FEATURES.split("").map((f, i) => {
        const Icon = featureIcons[f];
        return (
          <Feature key={i} $last={i === FEATURES.length - 1}>
            <Icon />
            <Tick />
          </Feature>
        );
      })}
    </Features>
    <Marker>
      <svg width="19" height="49" viewBox="0 0 19 49" fill="#666">
        <path d="M.5 0H18.500V6L11 14V48H8V14L.5 6Z" />
      </svg>
    </Marker>
    <GearSlot>
      <Gear hole={4} />
    </GearSlot>
  </TimelineBar>
);

/* ---------- windows taskbar ---------- */

const Taskbar = styled.footer`
  display: flex;
  align-items: center;
  height: 60px;
  background: #1e2128;
  color: #fff;
  font-family: "Open Sans", "Noto Sans", sans-serif;
`;

const StartButton = styled.div`
  width: 72px;
  padding-left: 24px;
`;

const SearchBox = styled.div`
  display: flex;
  align-items: center;
  gap: 18px;
  width: 432px;
  height: 60px;
  padding: 2px 0 0 16px;
  border: 2px solid #bdbdbd;
  background: #f2f2f2;
  color: #2b2b2b;
  font-size: 21.5px;
  letter-spacing: 0;
  white-space: nowrap;
`;

const TaskView = styled.div`
  width: 75px;
  padding-left: 23px;
`;

const TaskButton = styled.div`
  width: 75px;
  padding: 0 ${(p) => (p.$active ? "0" : "7px")};
`;

const TaskInner = styled.div`
  display: flex;
  align-items: center;
  justify-content: center;
  width: ${(p) => (p.$active ? 73 : 61)}px;
  height: 60px;
  margin-left: ${(p) => (p.$active ? 1 : 0)}px;
  padding-top: 3px;
  border-bottom: 3px solid #76b9ed;
  background: ${(p) => (p.$active ? "#4c4f53" : "transparent")};
`;

const Chrome = ({ badge }) => (
  <svg width="36" height="36" viewBox="0 0 36 36">
    <circle cx="18" cy="18" r="18" fill="#fbc116" />
    <path d="M2.400 9A18 18 0 0 1 33.600 9H18L10 22Z" fill="#e33b2e" />
    <path d="M2.400 9A18 18 0 0 0 18 36L26 22.500L10.500 22.500Z" fill="#279847" />
    <circle cx="18" cy="18" r="9" fill="#fff" />
    <circle cx="18" cy="18" r="7" fill="#3b7ded" />
    {badge === "sky" ? (
      <g>
        <circle cx="27" cy="27" r="12" fill="#29497a" />
        <path d="M15.500 29Q20 27 25 31Q32 26 38.500 29A12 12 0 0 1 15.500 29Z" fill="#c3ccd6" />
        <path d="M18 34Q25 31 35 35A12 12 0 0 1 18 34Z" fill="#7e8c9b" />
      </g>
    ) : (
      <g>
        <circle cx="27" cy="27" r="12" fill="#8a7460" />
        <path d="M20 17Q27 13 34 17L30 27H24Z" fill="#5a3c29" />
        <ellipse cx="21.500" cy="31" rx="4.500" ry="4" fill="#b5a48e" />
        <ellipse cx="32.500" cy="31" rx="4.500" ry="4" fill="#b5a48e" />
        <circle cx="27" cy="28" r="2" fill="#8e4a30" />
        <path d="M19 24L23 25M31 25L35 24M27 30V35" stroke="#2a1d15" strokeWidth="2" />
      </g>
    )}
  </svg>
);

const Spotify = () => (
  <svg width="34" height="34" viewBox="0 0 34 34" fill="none">
    <circle cx="17" cy="17" r="17" fill="#1ed760" />
    <g stroke="#15211a" strokeLinecap="round">
      <path d="M7 11Q18 8 28 13" strokeWidth="3.300" />
      <path d="M8 17Q17 14.500 26 19" strokeWidth="2.800" />
      <path d="M9 22.500Q17 20.500 24 24" strokeWidth="2.300" />
    </g>
  </svg>
);

const Explorer = () => (
  <svg width="32" height="28" viewBox="0 0 32 28">
    <path d="M0 1.500Q0 1 1 1H12L15 5H31Q32 5 32 6V25Q32 26 31 26H1Q0 26 0 25Z" fill="#e5a00d" />
    <path d="M0 7H13L16 4.500H31Q32 5 32 6V25Q32 26 31 26H1Q0 26 0 25Z" fill="#ffd869" />
    <path d="M5.500 27V17Q5.500 15 8 15H24Q26.500 15 26.500 17V27H21V20H11V27Z" fill="#3a96dd" />
  </svg>
);

const Photos = () => (
  <svg width="32" height="32" viewBox="0 0 32 32">
    <defs>
      <linearGradient id="photoSky" x1="0" y1="0" x2="1" y2="1">
        <stop offset="0" stopColor="#1ab4ee" />
        <stop offset=".5" stopColor="#4fa9ec" />
        <stop offset="1" stopColor="#a78ad8" />
      </linearGradient>
    </defs>
    <rect width="32" height="32" rx="1" fill="url(#photoSky)" />
    <path d="M15 20L20 15L32 27V32H15Z" fill="#3d6fc0" />
    <path d="M0 20L10 11L30 32H0Z" fill="#134a93" />
    <circle cx="21" cy="8" r="3.200" fill="#f3f6fa" />
  </svg>
);

const tasks = [
  <Chrome badge="sky" />,
  <Spotify />,
  <FusionIcon w={34} h={36} />,
  <Chrome badge="cat" />,
  <Explorer />,
  <Photos />,
];

const Tray = styled.div`
  display: flex;
  align-items: center;
  flex: 1;
  height: 60px;
  padding-left: 217px;
`;

const Weather = styled.div`
  display: flex;
  align-items: center;
  width: 199px;
  font-size: 21px;
  letter-spacing: -0.45px;
  white-space: pre;

  svg {
    margin-right: 15px;
  }

  span {
    padding-top: 2px;
  }
`;

const Language = styled.div`
  width: 54px;
  font-size: 17px;
  letter-spacing: -0.9px;
`;

const Clock = styled.div`
  width: 80px;
  margin-right: 31px;
  font-size: 17.5px;
  line-height: 28px;
  letter-spacing: -0.35px;
  text-align: center;
`;

const ShowDesktop = styled.div`
  width: 8px;
  height: 60px;
  margin-left: auto;
  border-left: 2px solid #6f7277;
`;

const SystemTray = () => (
  <Tray>
    <Weather>
      <svg width="30" height="30" viewBox="0 0 30 30">
        <defs>
          <linearGradient id="sun" x1=".2" y1="0" x2=".7" y2="1">
            <stop offset="0" stopColor="#f4b434" />
            <stop offset="1" stopColor="#ee6a10" />
          </linearGradient>
        </defs>
        <circle cx="15" cy="15" r="15" fill="url(#sun)" />
      </svg>
      <span>{"62°F  Sunny"}</span>
    </Weather>
    <Slot $w={49}>
      <svg width="18" height="11" viewBox="0 0 18 11" fill="none" stroke="#fff" strokeWidth="1.500">
        <path d="M.5 10L9 1.500L17.500 10" />
      </svg>
    </Slot>
    <Slot $w={44}>
      <svg width="17" height="23" viewBox="0 0 17 23" fill="none" stroke="#fff" strokeWidth="1.300">
        <rect x="1" y="6" width="9" height="11" rx="1" />
        <path d="M10 10L15.500 7V16L10 13M2 2.500Q7 -.5 13 2.500M2 20.500Q7 23.500 13 20.500" />
      </svg>
    </Slot>
    <Slot $w={48}>
      <svg width="25" height="18" viewBox="0 0 25 18" fill="none" stroke="#fff" strokeWidth="1.300">
        <path d="M1.500 0V3M5.500 0V3M.5 3H6.500V6Q6.500 8 3.500 8Q.5 8 .5 6ZM3.500 8V16H6" />
        <rect x="6.500" y="5" width="16" height="11" />
        <rect x="8" y="6.500" width="13" height="8" fill="#fff" />
        <path d="M24 8.500V12.500" strokeWidth="1.600" />
      </svg>
    </Slot>
    <Slot $w={56}>
      <svg width="25" height="21" viewBox="0 0 25 21">
        <path d="M6 8Q8 1 14 2Q20 4 19 12L10 15Z" fill="#8c8c8c" />
        <path d="M4 16Q0 15 0 11.500Q0 8 4 7.500Q7 4 11 8L14 16Z" fill="#c9c9c9" />
        <circle cx="17.500" cy="14.500" r="7" fill="#fce100" />
        <path d="M17.500 10V15.500M17.500 17V19" stroke="#222" strokeWidth="2" />
      </svg>
    </Slot>
    <Slot $w={51}>
      <svg width="21" height="21" viewBox="0 0 21 21" fill="none" stroke="#fff" strokeWidth="1.300">
        <path d="M8 15L8.500 10L16 1.500Q18.500 .5 19 3.500L11.500 12.500L8 15M13.500 10Q19 8 19.500 11Q19 14 14.500 15M8.500 11Q1 12 .8 16Q2 21 6 19Q8 18 8 15" />
      </svg>
    </Slot>
    <Language>ENG</Language>
    <Clock>
      6:48 PM
      <br />
      4/9/2023
    </Clock>
    <svg width="25" height="25" viewBox="0 0 25 25" fill="none">
      <path d="M0 0H24V19H14L10 23L6 19H0Z" fill="#fff" />
      <path d="M5 5.500H19M5 9.500H19M5 13.500H13" stroke="#1e2128" strokeWidth="1.400" />
      <path d="M20 11Q27 17 21 23Q16 26 12.500 21Q20 21 20 11Z" fill="#fff" stroke="#1e2128" strokeWidth="1.300" />
    </svg>
    <ShowDesktop />
  </Tray>
);

const WindowsTaskbar = () => (
  <Taskbar>
    <StartButton>
      <svg width="24" height="24" viewBox="0 0 24 24" fill="#fff">
        <path d="M0 3.500L10 2V11.500H0ZM11.200 1.800L24 0V11.500H11.200ZM0 12.700H10V22.200L0 20.700ZM11.200 12.700H24V24L11.200 22.300Z" />
      </svg>
    </StartButton>
    <SearchBox>
      <svg width="24" height="25" viewBox="0 0 24 25" fill="none" stroke="#111" strokeWidth="1.700">
        <circle cx="15.500" cy="8.500" r="7.500" />
        <path d="M10 14L.5 24" />
      </svg>
      Type here to search
    </SearchBox>
    <TaskView>
      <svg width="25" height="24" viewBox="0 0 25 24" fill="none" stroke="#fff" strokeWidth="1.500">
        <rect x="1.500" y="6.500" width="14" height="11" />
        <path d="M1 0V3.500H16V0M1 24V20.500H16V24M23.500 0V5M23.500 11V24" />
        <rect x="22.500" y="6.500" width="2" height="3" fill="#fff" stroke="none" />
      </svg>
    </TaskView>
    {tasks.map((icon, i) => (
      <TaskButton key={i} $active={i === 2}>
        <TaskInner $active={i === 2}>{icon}</TaskInner>
      </TaskButton>
    ))}
    <SystemTray />
  </Taskbar>
);

const Screen = styled.div`
  display: flex;
  flex-direction: column;
  width: 1920px;
  height: 1080px;
  background: #f1f1f1;
`;

function App() {
  return (
    <Screen>
      <GlobalStyle />
      <AppTitle />
      <DocumentTabs />
      <Toolbar />
      <Viewport>
        <Model />
        <BrowserTree />
        <Panel $top={6}>
          <svg width="16" height="10" viewBox="0 0 16 10" fill="#333">
            <path d="M0 5L7.500 0V10ZM8 5L15.500 0V10Z" />
          </svg>
          <PanelTitle $pad={15} $ls={-0.6}>
            BROWSER
          </PanelTitle>
          <PanelEnd />
        </Panel>
        <Panel $top={693}>
          <PanelTitle $pad={31} $ls={-0.95}>
            COMMENTS
          </PanelTitle>
          <PanelEnd plus />
        </Panel>
        <Navigation />
        <ViewCube />
      </Viewport>
      <Timeline />
      <WindowsTaskbar />
    </Screen>
  );
}

export default App;
